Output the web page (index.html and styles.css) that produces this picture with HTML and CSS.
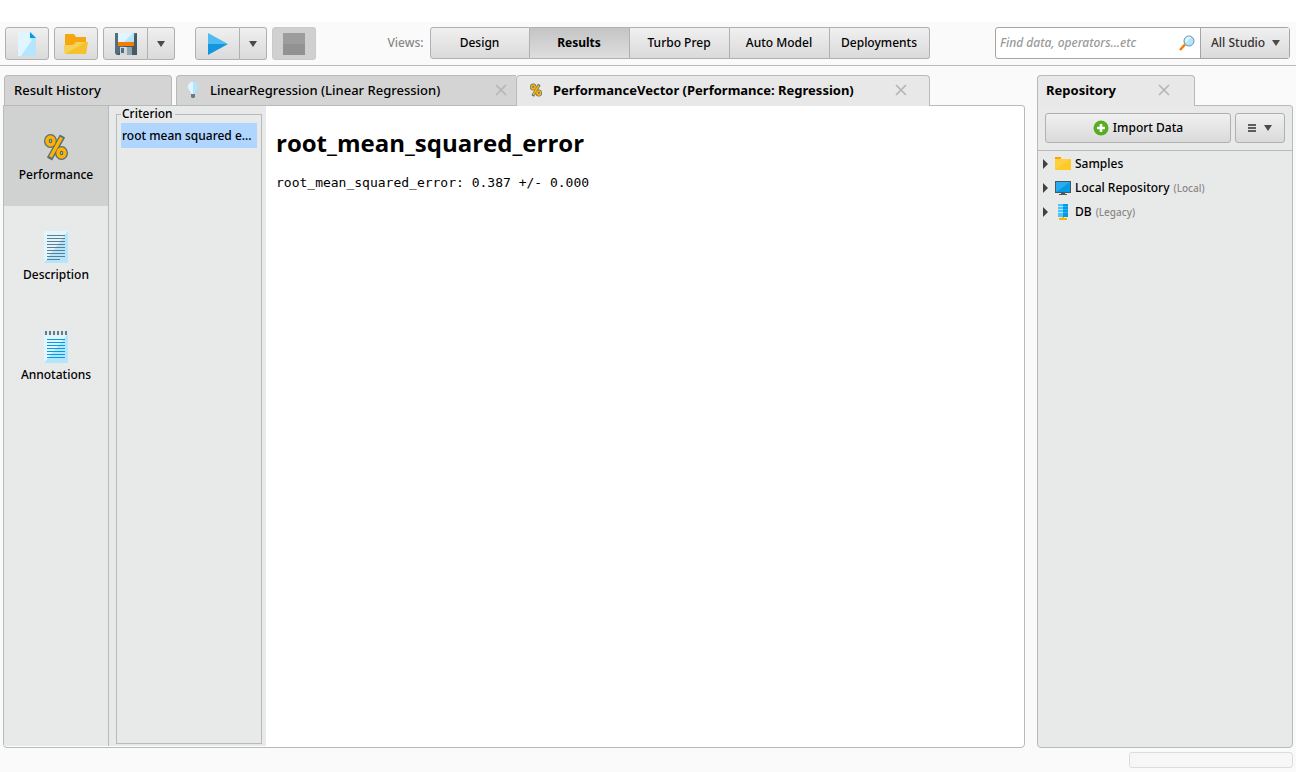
FILE: index.html
```
<!DOCTYPE html>
<html lang="en">
<head>
<meta charset="utf-8">
<title>Results</title>
<link rel="stylesheet" href="styles.css">
</head>
<body>
<svg class="defs" aria-hidden="true">
  <symbol id="percent" viewBox="0 0 24 26">
    <g fill="none" stroke="#546e7a" stroke-width="6"><path d="M18.500 2 5.500 25"/><ellipse cx="6.500" cy="7" rx="3.500" ry="4"/><ellipse cx="17.500" cy="19" rx="3.500" ry="4"/></g>
    <g fill="none" stroke="#ffb300" stroke-width="3.400"><path d="M17.500 3.500 6.500 23"/><ellipse cx="6.500" cy="7" rx="3.500" ry="4"/><ellipse cx="17.500" cy="19" rx="3.500" ry="4"/></g>
  </symbol>
  <symbol id="close" viewBox="0 0 12 12"><path d="M1 1 11 11M11 1 1 11" stroke="#b5b5b5" stroke-width="1.700"/></symbol>
  <symbol id="down" viewBox="0 0 8 6"><path d="M0 0H8L4 6Z" fill="#4a4a4a"/></symbol>
  <symbol id="right" viewBox="0 0 5 10"><path d="M0 0 5 5 0 10Z" fill="#404040"/></symbol>
</svg>
<header class="toolbar">
  <button class="btn tool" aria-label="New process"><svg width="18" height="24" viewBox="0 0 18 24"><path d="M0 0H12L18 6V24H0Z" fill="#b3e5fc"/><path d="M0 0H12V6L14 8 3 24H0Z" fill="#e1f5fe"/><path d="M12 0 18 6H12Z" fill="#039be5"/></svg></button>
  <button class="btn tool" aria-label="Open"><svg width="24" height="20" viewBox="0 0 24 20"><path d="M1 0H10L12 3H22V14H1Z" fill="#f5a70f"/><path d="M0 11H9L12 8H24L22 20H1Z" fill="#f5c22b"/><path d="M0 11H9L12 8H22L1 20Z" fill="#f7d056"/></svg></button>
  <div class="split">
    <button class="btn tool" aria-label="Save"><svg width="22" height="22" viewBox="0 0 22 22"><path d="M0 0H22V22H2L0 20Z" fill="#455a64"/><path d="M0 0H22L2 22 0 20Z" fill="#546e7a"/><path d="M3 0H19V9H3Z" fill="#b3e5fc"/><path d="M3 0H18L9 9H3Z" fill="#e1f5fe"/><path d="M3 9H19V13H3Z" fill="#f57c00"/><path d="M5 14H17V22H5Z" fill="#b0bec5"/><path d="M5 14H12V22H5Z" fill="#cfd8dc"/><path d="M6 15H9V20H6Z" fill="#546e7a"/><path d="M12 14H17V22H12Z" fill="#90a4ae"/></svg></button>
    <button class="btn drop" aria-label="Save options"><svg width="8" height="6"><use href="#down"/></svg></button>
  </div>
  <div class="split run">
    <button class="btn tool" aria-label="Run"><svg width="20" height="22" viewBox="0 0 20 22"><path d="M0 0 20 11H0Z" fill="#4fbbee"/><path d="M0 11H20L0 22Z" fill="#1296dd"/></svg></button>
    <button class="btn drop" aria-label="Run options"><svg width="8" height="6"><use href="#down"/></svg></button>
  </div>
  <button class="btn tool stop" aria-label="Stop"><svg width="22" height="22" viewBox="0 0 22 22"><path d="M0 0H22V22H0Z" fill="#929292"/><path d="M0 0H22V11H0Z" fill="#9d9d9d"/></svg></button>
  <nav class="views" aria-label="Views">
    <span class="views-label">Views:</span>
    <div class="split">
      <button class="btn view">Design</button>
      <button class="btn view current">Results</button>
      <button class="btn view">Turbo Prep</button>
      <button class="btn view">Auto Model</button>
      <button class="btn view">Deployments</button>
    </div>
  </nav>
  <div class="search">
    <input type="text" aria-label="Search" placeholder="Find data, operators...etc">
    <svg width="16" height="16" viewBox="0 0 16 16"><path d="M1 15 6 9.500" stroke="#f57c00" stroke-width="2.500"/><circle cx="10" cy="6" r="5" fill="#b3e5fc" stroke="#6993ad"/><path d="M7 8A4 4 0 0 1 12 2Z" fill="#e1f5fe"/></svg>
    <div class="scope">
      <select aria-label="Search scope"><option>All Studio</option></select>
      <svg width="8" height="6"><use href="#down"/></svg>
    </div>
  </div>
</header>
<main class="workspace">
  <section class="dock results">
    <div class="tabs">
      <div class="tab history"><button class="tab-name">Result History</button></div>
      <div class="tab regression"><svg width="12" height="16" viewBox="0 0 12 16"><path d="M6 0C3 0 1 2 1 5C1 8 4 9 4 12H8C8 9 11 8 11 5C11 2 9 0 6 0Z" fill="#b3e5fc"/><path d="M6 0C3 0 1 2 1 5C1 8 4 9 4 12H6Z" fill="#e1f5fe"/><path d="M4 12H8V15L7 16H5L4 15Z" fill="#607d8b"/></svg><button class="tab-name">LinearRegression (Linear Regression)</button><button class="close" aria-label="Close"><svg width="12" height="12"><use href="#close"/></svg></button></div>
      <div class="tab vector active"><svg width="12" height="14"><use href="#percent"/></svg><button class="tab-name">PerformanceVector (Performance: Regression)</button><button class="close" aria-label="Close"><svg width="12" height="12"><use href="#close"/></svg></button></div>
    </div>
    <div class="panel">
      <nav class="side" aria-label="Result sections">
        <button class="side-item selected"><svg width="24" height="32"><use href="#percent"/></svg>Performance</button>
        <button class="side-item"><svg width="24" height="32" viewBox="0 0 24 32"><path d="M0 0H24V32H0Z" fill="#b3e5fc"/><path d="M0 0H24L0 32Z" fill="#e1f5fe"/><path d="M3 4.500H21M3 7.500H21M3 10.500H21M3 13.500H21M3 16.500H21M3 19.500H21M3 22.500H21M3 25.500H21M3 28.500H16" stroke="#607d8b"/></svg>Description</button>
        <button class="side-item"><svg width="24" height="32" viewBox="0 0 24 32"><path d="M0 4H24V32H0Z" fill="#b3e5fc"/><path d="M0 4H23L0 32Z" fill="#e1f5fe"/><path d="M2 0V4M6 0V4M10 0V4M14 0V4M18 0V4M22 0V4" stroke="#607d8b" stroke-width="2"/><path d="M3 8.500H21M3 11.500H21M3 14.500H21M3 17.500H21M3 20.500H21M3 23.500H21M3 26.500H21" stroke="#039be5"/></svg>Annotations</button>
      </nav>
      <div class="criteria">
        <fieldset>
          <legend>Criterion</legend>
          <button class="criterion">root mean squared e...</button>
        </fieldset>
      </div>
      <article class="report">
        <h1>root_mean_squared_error</h1>
        <pre>root_mean_squared_error: 0.387 +/- 0.000</pre>
      </article>
    </div>
  </section>
  <aside class="dock repository">
    <div class="tabs">
      <div class="tab active repo-tab"><button class="tab-name">Repository</button><button class="close" aria-label="Close"><svg width="12" height="12"><use href="#close"/></svg></button></div>
    </div>
    <div class="panel repo-panel">
      <div class="repo-bar">
        <button class="btn import"><svg width="16" height="16" viewBox="0 0 16 16"><circle cx="8" cy="8" r="7.500" fill="#55ad20"/><path d="M8 4V12M4 8H12" stroke="#fff" stroke-width="2.600"/></svg>Import Data</button>
        <button class="btn menu" aria-label="Repository menu"><svg width="8" height="8" viewBox="0 0 8 8"><path d="M0 1H8M0 4H8M0 7H8" stroke="#303030" stroke-width="1.600"/></svg><svg width="8" height="6"><use href="#down"/></svg></button>
      </div>
      <ul class="tree">
        <li><svg width="5" height="10"><use href="#right"/></svg><svg width="16" height="16" viewBox="0 0 16 16"><path d="M0 1H6V4H0Z" fill="#ffa000"/><path d="M0 3H16V14H0Z" fill="#ffca28"/><path d="M0 3H16L0 14Z" fill="#ffd54f" opacity=".5"/></svg>Samples</li>
        <li><svg width="5" height="10"><use href="#right"/></svg><svg width="16" height="16" viewBox="0 0 16 16"><path d="M0 1H16V13H0Z" fill="#455a64"/><path d="M1 2H15V12H1Z" fill="#039be5"/><path d="M1 2H15L1 12Z" fill="#29abee"/><path d="M6 13H10V14H12V15H4V14H6Z" fill="#455a64"/></svg>Local Repository <small>(Local)</small></li>
        <li><svg width="5" height="10"><use href="#right"/></svg><svg width="16" height="16" viewBox="0 0 16 16"><path d="M3 0H13V13H3Z" fill="#039be5"/><path d="M3 0H8V13H3Z" fill="#4fc3f7"/><path d="M3 2.500H8M3 5.500H8M3 8.500H8" stroke="#b3e5fc"/><path d="M8 2.500H13M8 5.500H13M8 8.500H13" stroke="#29b6f6"/><path d="M4 15H12M8 13V16" stroke="#ffb300" stroke-width="2"/></svg>DB <small>(Legacy)</small></li>
      </ul>
    </div>
  </aside>
</main>
<footer class="status"><div class="progress"></div></footer>
</body>
</html>
```
FILE: styles.css
```
* { box-sizing: border-box; }
body {
  margin: 0;
  min-height: 100vh;
  padding-top: 22px;
  display: flex;
  flex-direction: column;
  background: linear-gradient(#fff 22px, #fafafa 22px);
  color: #000;
  font: 500 12px/16px "Noto Sans", "Open Sans", sans-serif;
}
button, input, select { font: inherit; color: inherit; margin: 0; padding: 0; border: 0; background: none; }
svg { display: block; flex: none; }
.defs { position: absolute; width: 0; height: 0; }

.toolbar {
  display: flex;
  align-items: flex-start;
  gap: 5px;
  height: 44px;
  padding: 5px 6px 0 5px;
  border-bottom: 1px solid #b9b9b9;
}
.btn {
  display: flex;
  align-items: center;
  justify-content: center;
  border: 1px solid #b0b0b0;
  border-radius: 3px;
  background: linear-gradient(#f0f0f0, #dadada);
}
.tool { width: 44px; height: 33px; }
.drop { width: 28px; height: 33px; }
.split { display: flex; }
.split .btn:not(:first-child) { border-left: 0; border-top-left-radius: 0; border-bottom-left-radius: 0; }
.split .btn:not(:last-child) { border-top-right-radius: 0; border-bottom-right-radius: 0; }
.split .tool { width: 45px; }
.split .drop { width: 27px; }
.run { margin-left: 15px; }
.stop { background: #d0d0d0; border-color: #cacaca; }
.views { display: flex; margin: 0 auto; padding-left: 6px; }
.views-label { padding: 8px 6px 0 0; color: #888; }
.view { width: 100px; height: 32px; }
.current { background: linear-gradient(#c4c4c4, #dedede); font-weight: 700; }
.search {
  display: flex;
  align-items: center;
  width: 295px;
  height: 32px;
  border: 1px solid #a5a5a5;
  border-radius: 3px;
  background: #fff;
}
.search input { flex: 1; min-width: 0; padding-left: 4px; font-style: italic; outline: 0; }
.search input::placeholder { color: #999; opacity: 1; }
.scope {
  display: flex;
  align-items: center;
  align-self: stretch;
  width: 89px;
  margin-left: 5px;
  padding-right: 9px;
  border-left: 1px solid #a5a5a5;
  background: linear-gradient(#f0f0f0, #dadada);
}
.scope select { appearance: none; flex: 1; min-width: 0; padding-left: 10px; color: #333; }

.workspace { flex: 1; display: flex; gap: 12px; padding: 9px 3px 0; }
.dock { display: flex; flex-direction: column; min-width: 0; }
.results { flex: 1; }
.repository { width: 256px; }
.tabs { display: flex; height: 30px; }
.tab {
  display: flex;
  align-items: center;
  border: 1px solid #b9b9b9;
  border-bottom: 0;
  border-radius: 4px 4px 0 0;
  background: #d4d4d4;
  font-size: 13px;
  padding-bottom: 1px;
}
.tab .close { margin-left: auto; }
.active { position: relative; height: 31px; background: #e8e8e8; font-weight: 700; }
.history { width: 168px; margin: 0 4px 0 1px; padding-left: 9px; }
.regression { width: 340px; padding: 0 9px 1px 10px; gap: 11px; border-top-right-radius: 0; border-right: 0; }
.vector { width: 414px; padding: 0 22px 2px 13px; gap: 11px; }
.repo-tab { width: 158px; padding: 0 24px 2px 8px; }
.panel {
  flex: 1;
  display: flex;
  border: 1px solid #b9b9b9;
  border-radius: 0 3px 4px 4px;
  background: #fff;
  padding-bottom: 1px;
}
.side { width: 105px; border-right: 1px solid #b9b9b9; background: #e8eae9; }
.side-item {
  display: flex;
  flex-direction: column;
  align-items: center;
  justify-content: center;
  gap: 4px;
  width: 100%;
  height: 100px;
  padding-top: 2px;
}
.selected { background: #d0d2d1; }
.criteria { display: flex; width: 157px; padding: 0 4px 2px 7px; background: #e8eae9; }
fieldset { flex: 1; min-width: 0; margin: 0; padding: 1px 4px; border: 1px solid #b9b9b9; }
legend { padding: 0 2px 0 1px; }
.criterion {
  display: block;
  width: 100%;
  height: 25px;
  padding: 0 1px;
  white-space: nowrap;
  text-align: left;
  background: #b0d5ff;
}
.report { flex: 1; padding: 21px 10px; }
h1 { margin: 0 0 15px; font: 700 24px/32px "Open Sans", "Noto Sans", sans-serif; }
pre { margin: 0; font: 13px/18px "DejaVu Sans Mono", monospace; }

.repo-panel { flex-direction: column; background: #e8eae9; }
.repo-bar { display: flex; gap: 4px; padding: 7px; border-bottom: 1px solid #b9b9b9; }
.import { flex: 1; height: 30px; gap: 4px; }
.menu { width: 50px; height: 30px; gap: 8px; }
.tree { margin: 0; padding: 1px 0 0 5px; list-style: none; }
.tree li { display: flex; align-items: center; height: 24px; gap: 4px; }
.tree li svg:first-child { margin-right: 3px; }
small { font-size: 10px; color: #888; }
.status { display: flex; justify-content: flex-end; height: 24px; padding: 4px 3px; }
.progress { width: 164px; height: 16px; border: 1px solid #dcdcdc; border-radius: 3px; background: #f7f7f7; }
```
